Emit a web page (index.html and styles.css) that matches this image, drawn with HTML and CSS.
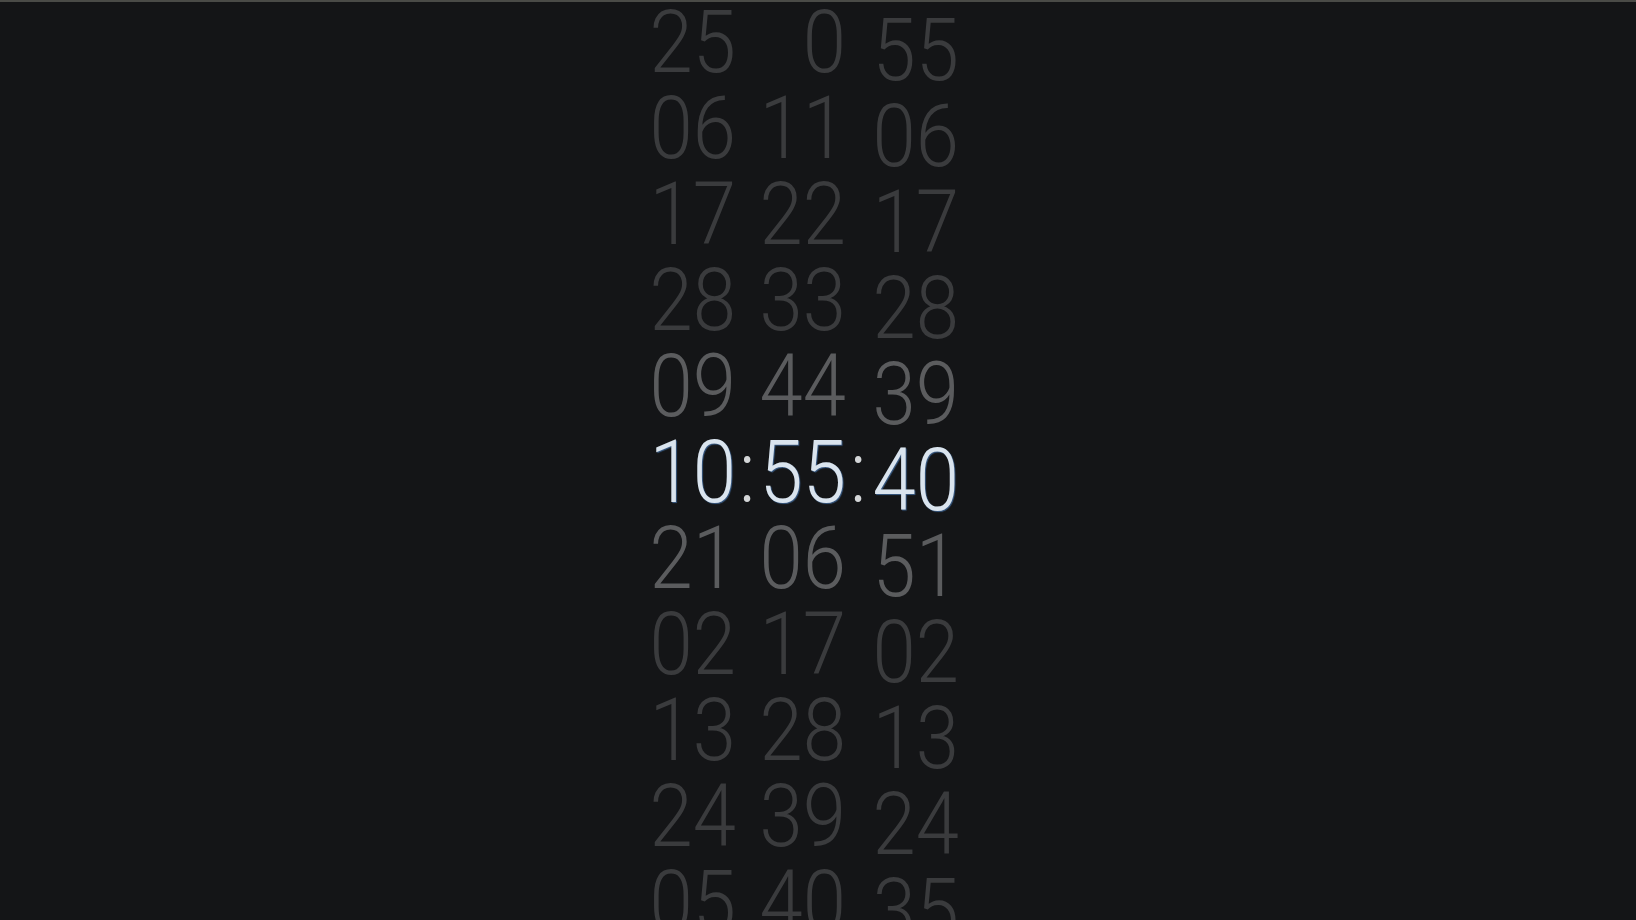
FILE: index.html
```html
<!DOCTYPE html>
<html lang="en">
<head>
<meta charset="utf-8">
<title>Clock</title>
<link rel="stylesheet" href="styles.css">
</head>
<body>
<div class="topbar"></div>
<main class="clock">
  <div class="col col-hours">
    <div class="digits">
      <div class="row">25</div>
      <div class="row">06</div>
      <div class="row">17</div>
      <div class="row">28</div>
      <div class="row near">09</div>
      <div class="row now">10</div>
      <div class="row near">21</div>
      <div class="row">02</div>
      <div class="row">13</div>
      <div class="row">24</div>
      <div class="row">05</div>
    </div>
  </div>
  <div class="sep sep-1"><span class="colon">:</span></div>
  <div class="col col-minutes">
    <div class="digits">
      <div class="row">0</div>
      <div class="row">11</div>
      <div class="row">22</div>
      <div class="row">33</div>
      <div class="row near">44</div>
      <div class="row now">55</div>
      <div class="row near">06</div>
      <div class="row">17</div>
      <div class="row">28</div>
      <div class="row">39</div>
      <div class="row">40</div>
    </div>
  </div>
  <div class="sep sep-2"><span class="colon">:</span></div>
  <div class="col col-seconds">
    <div class="digits">
      <div class="row">55</div>
      <div class="row">06</div>
      <div class="row">17</div>
      <div class="row">28</div>
      <div class="row near">39</div>
      <div class="row now">40</div>
      <div class="row near">51</div>
      <div class="row">02</div>
      <div class="row">13</div>
      <div class="row">24</div>
      <div class="row">35</div>
    </div>
  </div>
</main>
</body>
</html>
```
FILE: styles.css
```css
html, body {
  margin: 0;
  padding: 0;
}
body {
  background: #141517;
  font-family: Roboto, "Noto Sans", sans-serif;
  font-weight: 300;
  height: 920px;
  overflow: hidden;
}
.topbar {
  height: 2px;
  background: #4a4b47;
}
.clock {
  display: flex;
  align-items: flex-start;
  margin-top: -3px;
  padding-left: 648px;
  font-size: 88px;
  line-height: 86px;
}
.col {
  width: 88px;
  flex: none;
}
.col-seconds {
  margin-top: 8px;
}
.digits {
  width: 99.4px;
  transform: scaleX(0.885);
  transform-origin: 0 0;
  text-align: right;
}
.row {
  height: 86px;
  color: #3a3b3d;
  white-space: nowrap;
}
.row.near {
  color: #5b5c5e;
}
.row.now {
  color: #dae4ee;
  text-shadow: 1px 1px 1px rgba(70, 115, 170, 0.75);
}
.sep {
  flex: none;
  width: 22px;
  padding-top: 430px;
  height: 86px;
  text-align: center;
  color: #d4d6d8;
}
.sep-2 {
  width: 25px;
}
.colon {
  display: inline-block;
  transform: scaleX(0.885);
}
```
